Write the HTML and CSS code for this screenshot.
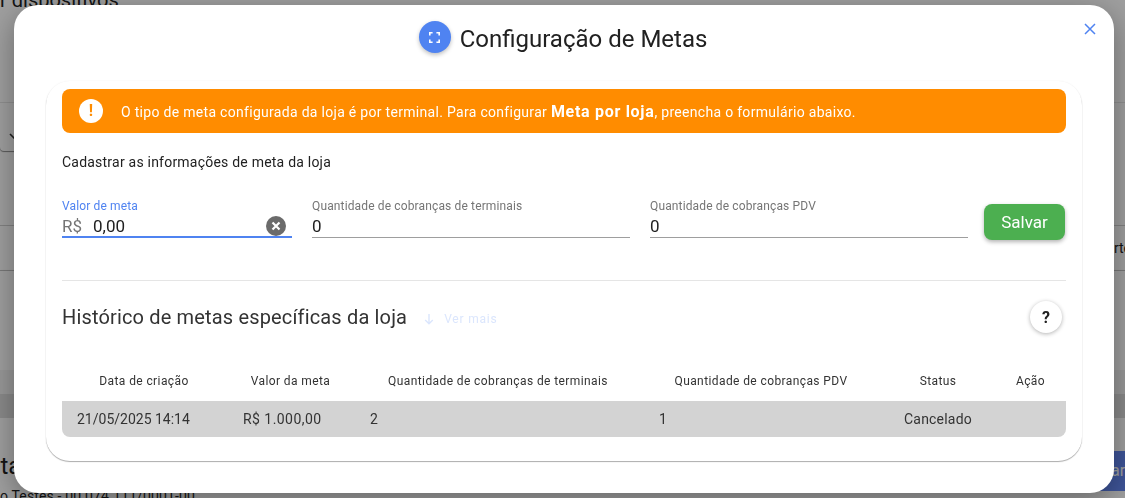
FILE: index.html
```html
<!DOCTYPE html>
<html lang="pt-BR">
<head>
  <meta charset="UTF-8">
  <meta name="viewport" content="width=device-width, initial-scale=1.0">
  <title>Configuração de Metas</title>
  <link rel="stylesheet" href="styles.css">
</head>
<body>
  <!-- Page behind the modal -->
  <div class="page">
    <div class="page-title">r dispositivos</div>
    <div class="filters">
      <div class="select-box">
        <svg class="select-arrow" width="10" height="6" viewBox="0 0 10 6"><path d="M1 1l4 4 4-4" fill="none" stroke="#333" stroke-width="1.6"/></svg>
      </div>
    </div>
    <div class="bg-row"><span>rte</span></div>
    <div class="bg-panel"></div>
    <div class="bg-gap"></div>
    <div class="bg-band"></div>
    <div class="bg-bottom">
      <div class="bg-store">
        <div class="bg-store-name">sta</div>
        <div class="bg-store-doc">o Testes - 00.074.111/0001-00</div>
      </div>
      <div class="bg-button">ar</div>
    </div>
  </div>

  <div class="backdrop"></div>

  <div class="modal">
    <button class="close-btn" type="button" aria-label="Fechar">
      <svg width="12" height="12" viewBox="0 0 12 12"><path d="M1 1l10 10M11 1L1 11" stroke="#4f83f1" stroke-width="1.5" fill="none"/></svg>
    </button>

    <div class="modal-header">
      <span class="header-icon">
        <svg width="11" height="11" viewBox="0 0 11 11"><path d="M.8 3.6V.8h2.8M7.4.8h2.8v2.8M10.2 7.4v2.8H7.4M3.6 10.2H.8V7.4" fill="none" stroke="#fff" stroke-width="1.6"/></svg>
      </span>
      <h1>Configuração de Metas</h1>
    </div>

    <div class="card">
      <div class="alert">
        <span class="alert-icon">!</span>
        <p>O tipo de meta configurada da loja é por terminal. Para configurar <strong>Meta por loja</strong>, preencha o formulário abaixo.</p>
      </div>

      <p class="form-title">Cadastrar as informações de meta da loja</p>

      <form class="meta-form">
        <div class="field field-active field-small">
          <label>Valor de meta</label>
          <div class="field-input">
            <span class="prefix">R$</span>
            <span class="value">0,00</span>
            <span class="clear-icon">
              <svg width="10" height="10" viewBox="0 0 10 10"><path d="M1.5 1.5l7 7M8.5 1.5l-7 7" stroke="#fff" stroke-width="2.2" fill="none"/></svg>
            </span>
          </div>
        </div>
        <div class="field">
          <label>Quantidade de cobranças de terminais</label>
          <div class="field-input"><span class="value">0</span></div>
        </div>
        <div class="field">
          <label>Quantidade de cobranças PDV</label>
          <div class="field-input"><span class="value">0</span></div>
        </div>
        <button class="save-btn" type="button">Salvar</button>
      </form>

      <hr class="divider">

      <div class="history-head">
        <h2>Histórico de metas específicas da loja</h2>
        <span class="see-more">
          <svg width="10" height="12" viewBox="0 0 10 12"><path d="M5 1v9.5M1.2 7L5 10.7 8.8 7" fill="none" stroke="#dbe6fd" stroke-width="1.4"/></svg>
          Ver mais
        </span>
        <button class="help-btn" type="button">?</button>
      </div>

      <table class="history-table">
        <thead>
          <tr>
            <th class="col-date">Data de criação</th>
            <th class="col-value">Valor da meta</th>
            <th class="col-terminals">Quantidade de cobranças de terminais</th>
            <th class="col-pdv">Quantidade de cobranças PDV</th>
            <th class="col-status">Status</th>
            <th class="col-action">Ação</th>
          </tr>
        </thead>
        <tbody>
          <tr>
            <td>21/05/2025 14:14</td>
            <td class="cell-value">R$ 1.000,00</td>
            <td>2</td>
            <td class="cell-pdv">1</td>
            <td class="cell-center">Cancelado</td>
            <td></td>
          </tr>
        </tbody>
      </table>
    </div>
  </div>
</body>
</html>
```

FILE: styles.css
```css
* {
  box-sizing: border-box;
}

html, body {
  height: 100%;
}

body {
  margin: 0;
  overflow: hidden;
  font-family: Roboto, "Liberation Sans", Arial, sans-serif;
  color: #212121;
  background-color: #fff;
}

/* page behind the modal */
.page {
  height: 498px;
  overflow: hidden;
}

.page-title {
  height: 114px;
  margin-top: -12px;
  font-size: 20px;
  line-height: 24px;
  border-bottom: 1px solid #e6e6e6;
  box-sizing: content-box;
}

.filters {
  height: 123px;
  padding-top: 19px;
  border-bottom: 1px solid #d0d0d0;
}

.select-box {
  width: 60px;
  height: 29px;
  padding: 11px 0 0 9px;
  border-radius: 0 0 4px 4px;
  box-shadow: 0 1px 1px rgba(0, 0, 0, 0.45);
}

.select-arrow {
  display: block;
}

.bg-row {
  height: 45px;
  padding-top: 13px;
  text-align: right;
  font-size: 14px;
  line-height: 18px;
  margin-right: -6px;
  border-bottom: 1px solid #c4c4c4;
}

.bg-panel {
  height: 99px;
  box-shadow: 0 2px 3px rgba(0, 0, 0, 0.35);
}

.bg-gap {
  height: 24px;
  background-color: #f4f4f4;
}

.bg-band {
  height: 24px;
  background-color: #dddddd;
}

.bg-bottom {
  display: flex;
  justify-content: space-between;
  padding-top: 33px;
}

.bg-store-name {
  margin-top: 1px;
  margin-left: -12px;
  font-size: 24px;
  line-height: 28px;
}

.bg-store-doc {
  margin-top: 7px;
  font-size: 14px;
  line-height: 18px;
  letter-spacing: 0.15px;
  white-space: nowrap;
}

.bg-button {
  width: 60px;
  height: 40px;
  padding-left: 46px;
  font-size: 16px;
  line-height: 40px;
  color: #fff;
  background-color: #6488f5;
}

.backdrop {
  position: fixed;
  top: 0;
  left: 0;
  right: 0;
  bottom: 0;
  background-color: rgba(0, 0, 0, 0.38);
}

/* modal */
.modal {
  position: fixed;
  top: 5px;
  left: 14px;
  width: 1100px;
  height: 488px;
  padding: 16px 32px 0;
  background-color: #fff;
  border-radius: 24px;
  box-shadow: 0 8px 30px rgba(0, 0, 0, 0.35);
}

.close-btn {
  position: absolute;
  top: 18px;
  right: 18px;
  width: 12px;
  height: 12px;
  padding: 0;
  border: none;
  background: none;
  display: flex;
}

.modal-header {
  display: flex;
  align-items: center;
  justify-content: center;
  gap: 9px;
  height: 32px;
  margin-right: 2px;
}

.header-icon {
  display: flex;
  align-items: center;
  justify-content: center;
  width: 32px;
  height: 32px;
  border-radius: 50%;
  background-color: #4f83f1;
  box-shadow: 0 2px 4px rgba(0, 0, 0, 0.25);
}

.modal-header h1 {
  margin: 4px 0 0;
  font-size: 24px;
  font-weight: 400;
  line-height: 32px;
}

.card {
  height: 380px;
  margin-top: 28px;
  padding: 8px 16px 0;
  border-radius: 24px;
  background-color: #fff;
  box-shadow: 0 1px 1px rgba(0, 0, 0, 0.32), 0 0 2px rgba(0, 0, 0, 0.05);
}

.alert {
  display: flex;
  align-items: center;
  height: 44px;
  padding-left: 17px;
  border-radius: 8px;
  background-color: #ff8c00;
  color: #fff;
}

.alert-icon {
  flex: none;
  width: 24px;
  height: 24px;
  margin-right: 18px;
  border-radius: 50%;
  background-color: #fff;
  color: #ff8c00;
  font-size: 16px;
  font-weight: 700;
  line-height: 24px;
  text-align: center;
}

.alert p {
  margin: 0;
  font-size: 14px;
  letter-spacing: 0.3px;
}

.alert strong {
  font-size: 16px;
  letter-spacing: 0.7px;
}

.form-title {
  margin: 20px 0 0;
  font-size: 14px;
  line-height: 18px;
  letter-spacing: 0.22px;
}

.meta-form {
  display: flex;
  align-items: flex-start;
  gap: 20px;
  margin-top: 27px;
}

.field {
  flex: 1;
  height: 39px;
  margin-top: 1px;
  border-bottom: 1px solid #9e9e9e;
}

.field-small {
  flex: none;
  width: 230px;
}

.field-active {
  border-bottom: 2px solid #4f83f1;
}

.field label {
  display: block;
  font-size: 12px;
  line-height: 14px;
  letter-spacing: 0.14px;
  color: #757575;
  white-space: nowrap;
}

.field-active label {
  color: #4f83f1;
}

.field-input {
  display: flex;
  align-items: center;
  height: 24px;
  padding-top: 2px;
  font-size: 17px;
}

.prefix {
  margin-right: 11px;
  color: #757575;
}

.clear-icon {
  display: flex;
  align-items: center;
  justify-content: center;
  width: 20px;
  height: 20px;
  margin-left: auto;
  margin-right: 6px;
  border-radius: 50%;
  background-color: #6b6b6b;
}

.save-btn {
  flex: none;
  width: 81px;
  height: 36px;
  margin-top: 6px;
  margin-left: -4px;
  margin-right: 1px;
  border: none;
  border-radius: 8px;
  background-color: #4caf50;
  color: #fff;
  font-family: inherit;
  font-size: 17px;
  box-shadow: 0 2px 4px rgba(0, 0, 0, 0.3);
}

.divider {
  margin: 40px 0 0;
  border: none;
  border-top: 1px solid #e5e5e5;
}

.history-head {
  display: flex;
  align-items: center;
  height: 32px;
  margin-top: 20px;
}

.history-head h2 {
  margin: 0;
  font-size: 20px;
  font-weight: 400;
  letter-spacing: 0.16px;
  color: #333;
}

.see-more {
  display: flex;
  align-items: center;
  gap: 10px;
  margin-top: 3px;
  margin-left: 17px;
  font-size: 12px;
  letter-spacing: 0.8px;
  color: #dbe6fd;
}

.help-btn {
  width: 32px;
  height: 32px;
  margin-left: auto;
  margin-right: 4px;
  border: none;
  border-radius: 50%;
  background-color: #fff;
  color: #212121;
  font-family: inherit;
  font-size: 16px;
  font-weight: 700;
  box-shadow: 0 1px 4px rgba(0, 0, 0, 0.3);
}

.history-table {
  width: 100%;
  margin-top: 31px;
  border-collapse: collapse;
  table-layout: fixed;
  font-size: 14px;
}

.history-table th {
  height: 37px;
  padding: 0 0 4px;
  font-size: 12px;
  font-weight: 400;
  letter-spacing: 0.4px;
  text-align: center;
  color: #333;
}

.col-date { width: 164px; }
.col-value { width: 129px; }
.col-terminals { width: 286px; }
.col-pdv { width: 240px; }
.col-status { width: 114px; }
.col-action { width: 71px; }

.history-table td {
  height: 36px;
  padding: 0 0 0 15px;
  background-color: #d3d3d3;
  color: #333;
}

.history-table td:first-child {
  border-radius: 0 0 0 8px;
}

.history-table td:last-child {
  border-radius: 0 0 8px 0;
}

.history-table td.cell-value {
  padding-left: 17px;
  letter-spacing: 0.45px;
}

.history-table td.cell-pdv {
  padding-left: 18px;
}

.history-table td.cell-center {
  padding: 0;
  text-align: center;
  letter-spacing: 0.2px;
}
```
